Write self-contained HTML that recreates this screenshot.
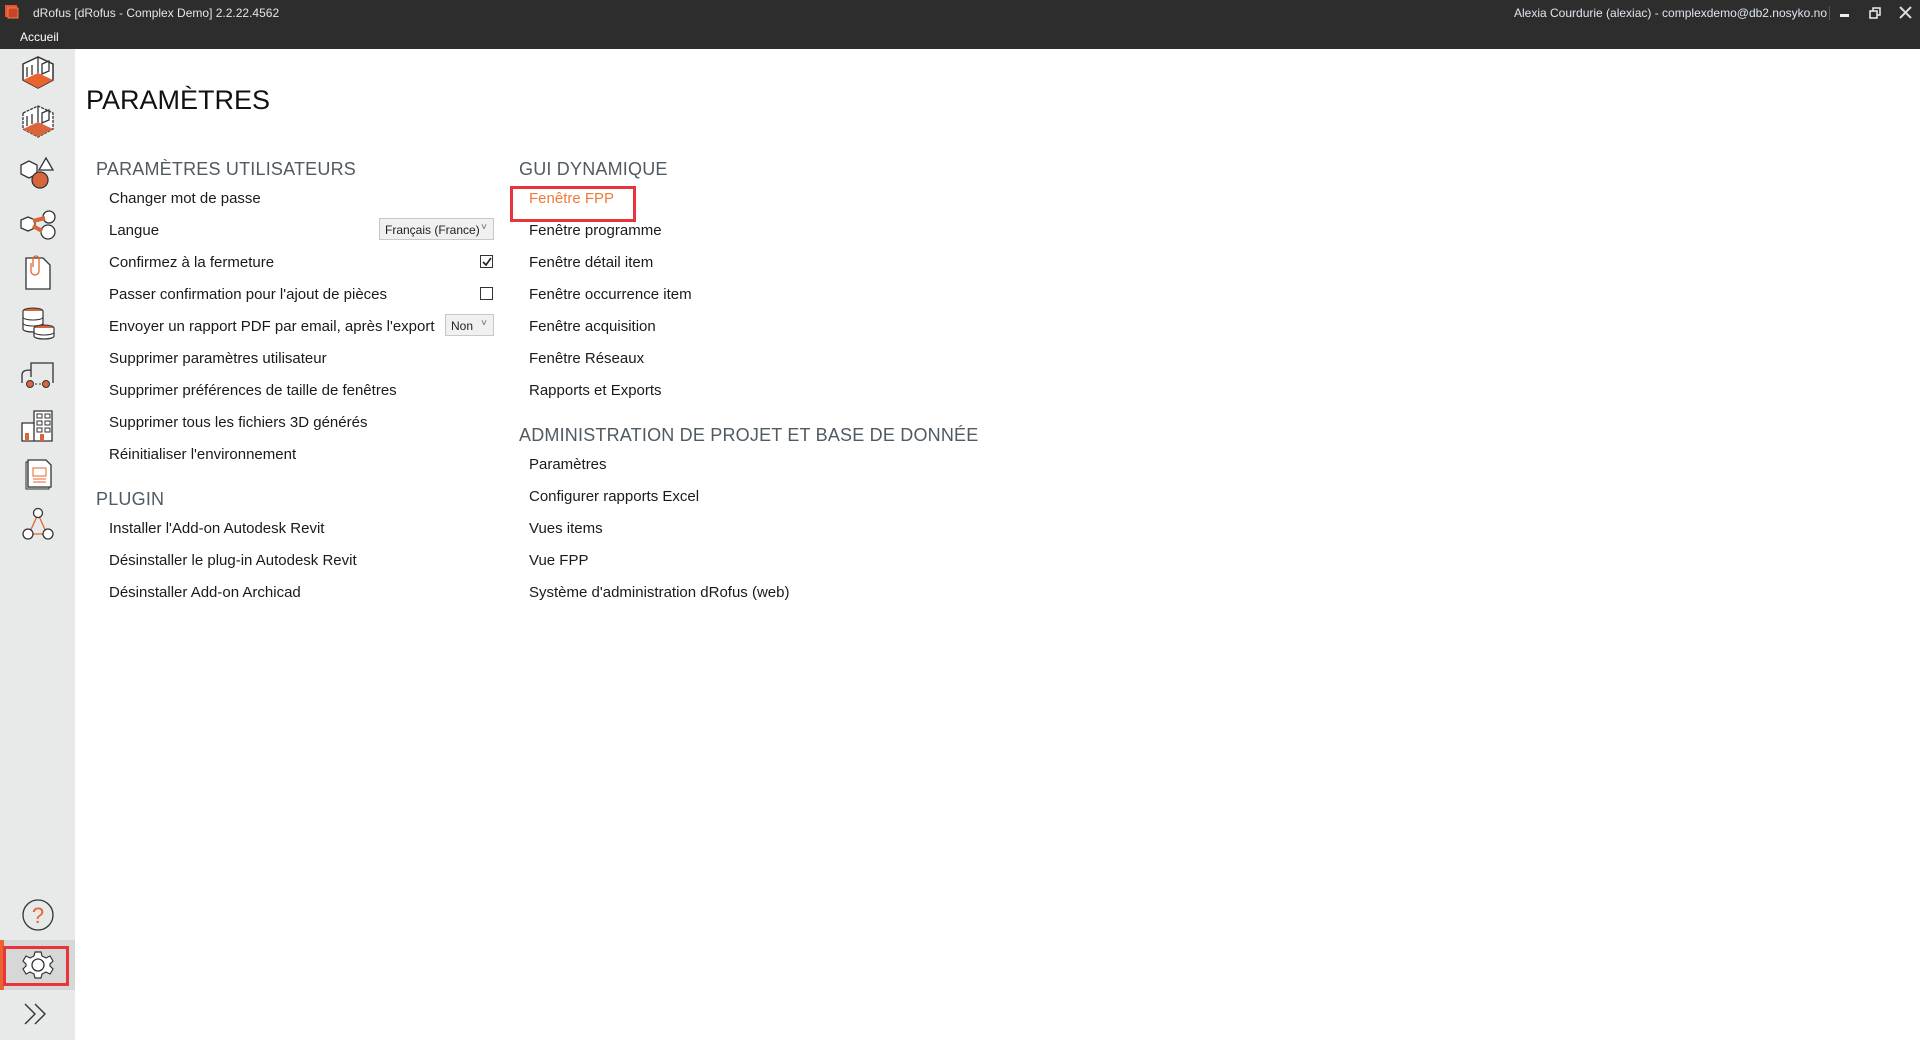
<!DOCTYPE html>
<html><head><meta charset="utf-8"><style>
*{margin:0;padding:0;box-sizing:border-box}
body{width:1920px;height:1040px;overflow:hidden;background:#fff;font-family:"Liberation Sans",Arial,sans-serif;position:relative}
.top{position:absolute;left:0;top:0;width:1920px;height:49px;background:#2d2d2d;color:#e6e6e6}
.t{position:absolute;font-size:12px;white-space:nowrap}
.side{position:absolute;left:0;top:49px;width:75px;height:991px;background:#e8e9e9}
.ic{position:absolute;left:18px;width:40px;height:40px}
.h1{position:absolute;left:86px;top:85px;font-size:27px;color:#111;letter-spacing:0}
.h2{position:absolute;font-size:18px;color:#505a62;letter-spacing:0.2px;white-space:nowrap}
.it{position:absolute;font-size:15px;color:#1a1a1a;white-space:nowrap;line-height:18px}
.dd{position:absolute;border:1px solid #c8c8c8;background:#f0f0f0;font-size:12px;color:#222;padding:4px 0 0 5px;height:22px}
.dd:after{content:"˅";position:absolute;right:6px;top:3px;font-size:10px;color:#666}
.cb{position:absolute;width:13px;height:13px;border:1px solid #333;background:#fff}
</style></head><body>
<div class="top">
<svg style="position:absolute;left:4px;top:4px" width="16" height="16"><rect x="1" y="1" width="12" height="12" fill="#e8562a"/><rect x="4" y="4" width="10" height="10" fill="#c9452a" stroke="#f08050" stroke-width="1"/></svg>
<div class="t" style="left:33px;top:6px;font-size:12px">dRofus [dRofus - Complex Demo] 2.2.22.4562</div>
<div class="t" style="left:20px;top:30px;color:#fff">Accueil</div>
<div class="t" style="left:1514px;top:6px;color:#dfe6ee">Alexia Courdurie (alexiac) - complexdemo@db2.nosyko.no</div>
<div style="position:absolute;left:1829px;top:6px;width:1px;height:14px;background:#555"></div>
<div style="position:absolute;left:1840px;top:14px;width:9px;height:3px;background:#eee"></div>
<svg style="position:absolute;left:1869px;top:7px" width="12" height="12"><rect x="1" y="4" width="7" height="7" fill="none" stroke="#eee" stroke-width="1.5"/><path d="M4 4V1h7v7H8" fill="none" stroke="#eee" stroke-width="1.5"/></svg>
<svg style="position:absolute;left:1899px;top:6px" width="13" height="13"><path d="M1 1L12 12M12 1L1 12" stroke="#ddd" stroke-width="2"/></svg>
</div>
<div class="side">
<svg class="ic" style="top:5px" viewBox="0 0 40 40"><path d="M5 10L20 3L35 10V26L20 34L5 26Z" fill="#fff" stroke="#333" stroke-width="1.5"/><path d="M5 26L20 19L35 26L20 34Z" fill="#e8632e"/><path d="M20 3V19M9 13v10M14 11v10M24 10l7-3v10l-7 3z" fill="none" stroke="#333" stroke-width="1.3"/></svg>
<svg class="ic" style="top:54px" viewBox="0 0 40 40"><path d="M5 10L20 3L35 10V26L20 34L5 26Z" fill="#fff" stroke="#333" stroke-width="1.3" stroke-dasharray="3 1"/><path d="M5 26L20 19L35 26L20 34Z" fill="#d9663a"/><path d="M20 3V19M9 13v10M14 11v10M24 10l7-3v10l-7 3z" fill="none" stroke="#333" stroke-width="1.3"/></svg>
<svg class="ic" style="top:104px" viewBox="0 0 40 40"><path d="M3 12l8-4 8 4v9l-8 4-8-4z" fill="#fff" stroke="#333" stroke-width="1.3"/><path d="M28 5l7 12H21z" fill="#fff" stroke="#333" stroke-width="1.3"/><circle cx="22" cy="27" r="8" fill="#d9663a" stroke="#333" stroke-width="1.3"/></svg>
<svg class="ic" style="top:155px" viewBox="0 0 40 40"><path d="M3 16l7-3 7 3v8l-7 3-7-3z" fill="#fff" stroke="#333" stroke-width="1.3"/><circle cx="31" cy="13" r="6" fill="#fff" stroke="#333" stroke-width="1.3"/><circle cx="30" cy="28" r="7" fill="#fff" stroke="#333" stroke-width="1.3"/><path d="M15 17l12-3M15 22l9 5" stroke="#d9663a" stroke-width="4"/></svg>
<svg class="ic" style="top:204px" viewBox="0 0 40 40"><path d="M8 5h17l7 7v24H8z" fill="#fff" stroke="#333" stroke-width="1.3"/><path d="M15 14V6a3 3 0 0 1 6 0v12a4 4 0 0 1-8 0V10" fill="none" stroke="#e8632e" stroke-width="1.3"/></svg>
<svg class="ic" style="top:254px" viewBox="0 0 40 40"><ellipse cx="15" cy="8" rx="10" ry="3" fill="#d9663a" stroke="#333"/><path d="M5 8v18c0 4 20 4 20 0V8" fill="#fff" stroke="#333" stroke-width="1.2"/><path d="M5 14c0 4 20 4 20 0M5 20c0 4 20 4 20 0" fill="none" stroke="#333"/><ellipse cx="26" cy="25" rx="10" ry="3" fill="#d9663a" stroke="#333"/><path d="M16 25v8c0 4 20 4 20 0v-8" fill="#fff" stroke="#333" stroke-width="1.2"/><path d="M16 29c0 4 20 4 20 0" fill="none" stroke="#333"/></svg>
<svg class="ic" style="top:305px" viewBox="0 0 40 40"><path d="M13 23V9h22v20M4 29v-8c0-4 3-5 9-5" fill="none" stroke="#333" stroke-width="1.3"/><circle cx="12" cy="30" r="3.5" fill="#d9663a" stroke="#333"/><circle cx="28" cy="30" r="3.5" fill="#d9663a" stroke="#333"/><path d="M17 30h2M21 30h2" stroke="#333"/></svg>
<svg class="ic" style="top:356px" viewBox="0 0 40 40"><path d="M4 18h12v18H4zM16 6h18v30H16z" fill="#fff" stroke="#333" stroke-width="1.3"/><path d="M19 9h5v4h-5zM27 9h5v4h-5zM19 16h5v4h-5zM27 16h5v4h-5zM19 23h5v4h-5zM27 23h5v4h-5z" fill="none" stroke="#333"/><path d="M7 28h4v8H7zM22 29h4v7h-4z" fill="#d9663a"/></svg>
<svg class="ic" style="top:405px" viewBox="0 0 40 40"><path d="M8 8h18l5 5v22H8z" fill="#ddd" stroke="#333"/><path d="M10 6h18l5 5v22H10z" fill="#fff" stroke="#333" stroke-width="1.3"/><path d="M15 14h13v8H15zM15 25h13M15 28h13" fill="none" stroke="#e8632e"/></svg>
<svg class="ic" style="top:456px" viewBox="0 0 40 40"><path d="M20 9L11 29M20 9L29 29M11 29h18" stroke="#e8632e" stroke-width="1.3"/><circle cx="20" cy="8" r="4.5" fill="#fff" stroke="#333" stroke-width="1.3"/><circle cx="10" cy="29" r="5" fill="#fff" stroke="#333" stroke-width="1.3"/><circle cx="30" cy="29" r="5" fill="#fff" stroke="#333" stroke-width="1.3"/></svg>
<svg class="ic" style="top:846px" viewBox="0 0 40 40"><circle cx="20" cy="20" r="15" fill="none" stroke="#333" stroke-width="1.3"/><text x="20" y="28" text-anchor="middle" font-family="Liberation Sans" font-size="22" fill="#e8632e">?</text></svg>
<div style="position:absolute;left:0;top:891px;width:75px;height:50px;background:#d6d8d8"></div>
<div style="position:absolute;left:0;top:891px;width:4px;height:50px;background:#e8632e"></div>
<div style="position:absolute;left:3px;top:897px;width:66px;height:40px;border:3px solid #e8343a"></div>
<svg class="ic" style="top:896px" viewBox="0 0 40 40"><path d="M17 7h6l1 4 4 2 4-2 3 5-3 3v2l3 3-3 5-4-2-4 2-1 4h-6l-1-4-4-2-4 2-3-5 3-3v-2l-3-3 3-5 4 2 4-2z" fill="#fff" stroke="#333" stroke-width="1.2"/><circle cx="20" cy="20" r="6" fill="none" stroke="#333" stroke-width="1.3"/></svg>
<svg class="ic" style="top:945px" viewBox="0 0 40 40"><path d="M7 10l10 10-10 10M17 10l10 10-10 10" fill="none" stroke="#333" stroke-width="1.4"/></svg>
</div>
<div class="h1">PARAMÈTRES</div>
<div class="h2" style="left:96px;top:159px">PARAMÈTRES UTILISATEURS</div>
<div class="it" style="left:109px;top:190px">Changer mot de passe</div>
<div class="it" style="left:109px;top:222px">Langue</div>
<div class="it" style="left:109px;top:254px">Confirmez à la fermeture</div>
<div class="it" style="left:109px;top:286px">Passer confirmation pour l'ajout de pièces</div>
<div class="it" style="left:109px;top:318px">Envoyer un rapport PDF par email, après l'export</div>
<div class="it" style="left:109px;top:350px">Supprimer paramètres utilisateur</div>
<div class="it" style="left:109px;top:382px">Supprimer préférences de taille de fenêtres</div>
<div class="it" style="left:109px;top:414px">Supprimer tous les fichiers 3D générés</div>
<div class="it" style="left:109px;top:446px">Réinitialiser l'environnement</div>
<div class="dd" style="left:379px;top:218px;width:115px">Français (France)</div>
<div class="cb" style="left:480px;top:255px"><svg width="11" height="11" style="position:absolute;left:0;top:0"><path d="M2 6l3 3 5-7" fill="none" stroke="#222" stroke-width="1.6"/></svg></div>
<div class="cb" style="left:480px;top:287px"></div>
<div class="dd" style="left:445px;top:314px;width:49px">Non</div>
<div class="h2" style="left:96px;top:489px">PLUGIN</div>
<div class="it" style="left:109px;top:520px">Installer l'Add-on Autodesk Revit</div>
<div class="it" style="left:109px;top:552px">Désinstaller le plug-in Autodesk Revit</div>
<div class="it" style="left:109px;top:584px">Désinstaller Add-on Archicad</div>
<div class="h2" style="left:519px;top:159px">GUI DYNAMIQUE</div>
<div style="position:absolute;left:510px;top:186px;width:126px;height:36px;border:3px solid #e8343a"></div>
<div class="it" style="left:529px;top:190px;color:#f07a3a">Fenêtre FPP</div>
<div class="it" style="left:529px;top:222px">Fenêtre programme</div>
<div class="it" style="left:529px;top:254px">Fenêtre détail item</div>
<div class="it" style="left:529px;top:286px">Fenêtre occurrence item</div>
<div class="it" style="left:529px;top:318px">Fenêtre acquisition</div>
<div class="it" style="left:529px;top:350px">Fenêtre Réseaux</div>
<div class="it" style="left:529px;top:382px">Rapports et Exports</div>
<div class="h2" style="left:519px;top:425px">ADMINISTRATION DE PROJET ET BASE DE DONNÉE</div>
<div class="it" style="left:529px;top:456px">Paramètres</div>
<div class="it" style="left:529px;top:488px">Configurer rapports Excel</div>
<div class="it" style="left:529px;top:520px">Vues items</div>
<div class="it" style="left:529px;top:552px">Vue FPP</div>
<div class="it" style="left:529px;top:584px">Système d'administration dRofus (web)</div>
</body></html>
